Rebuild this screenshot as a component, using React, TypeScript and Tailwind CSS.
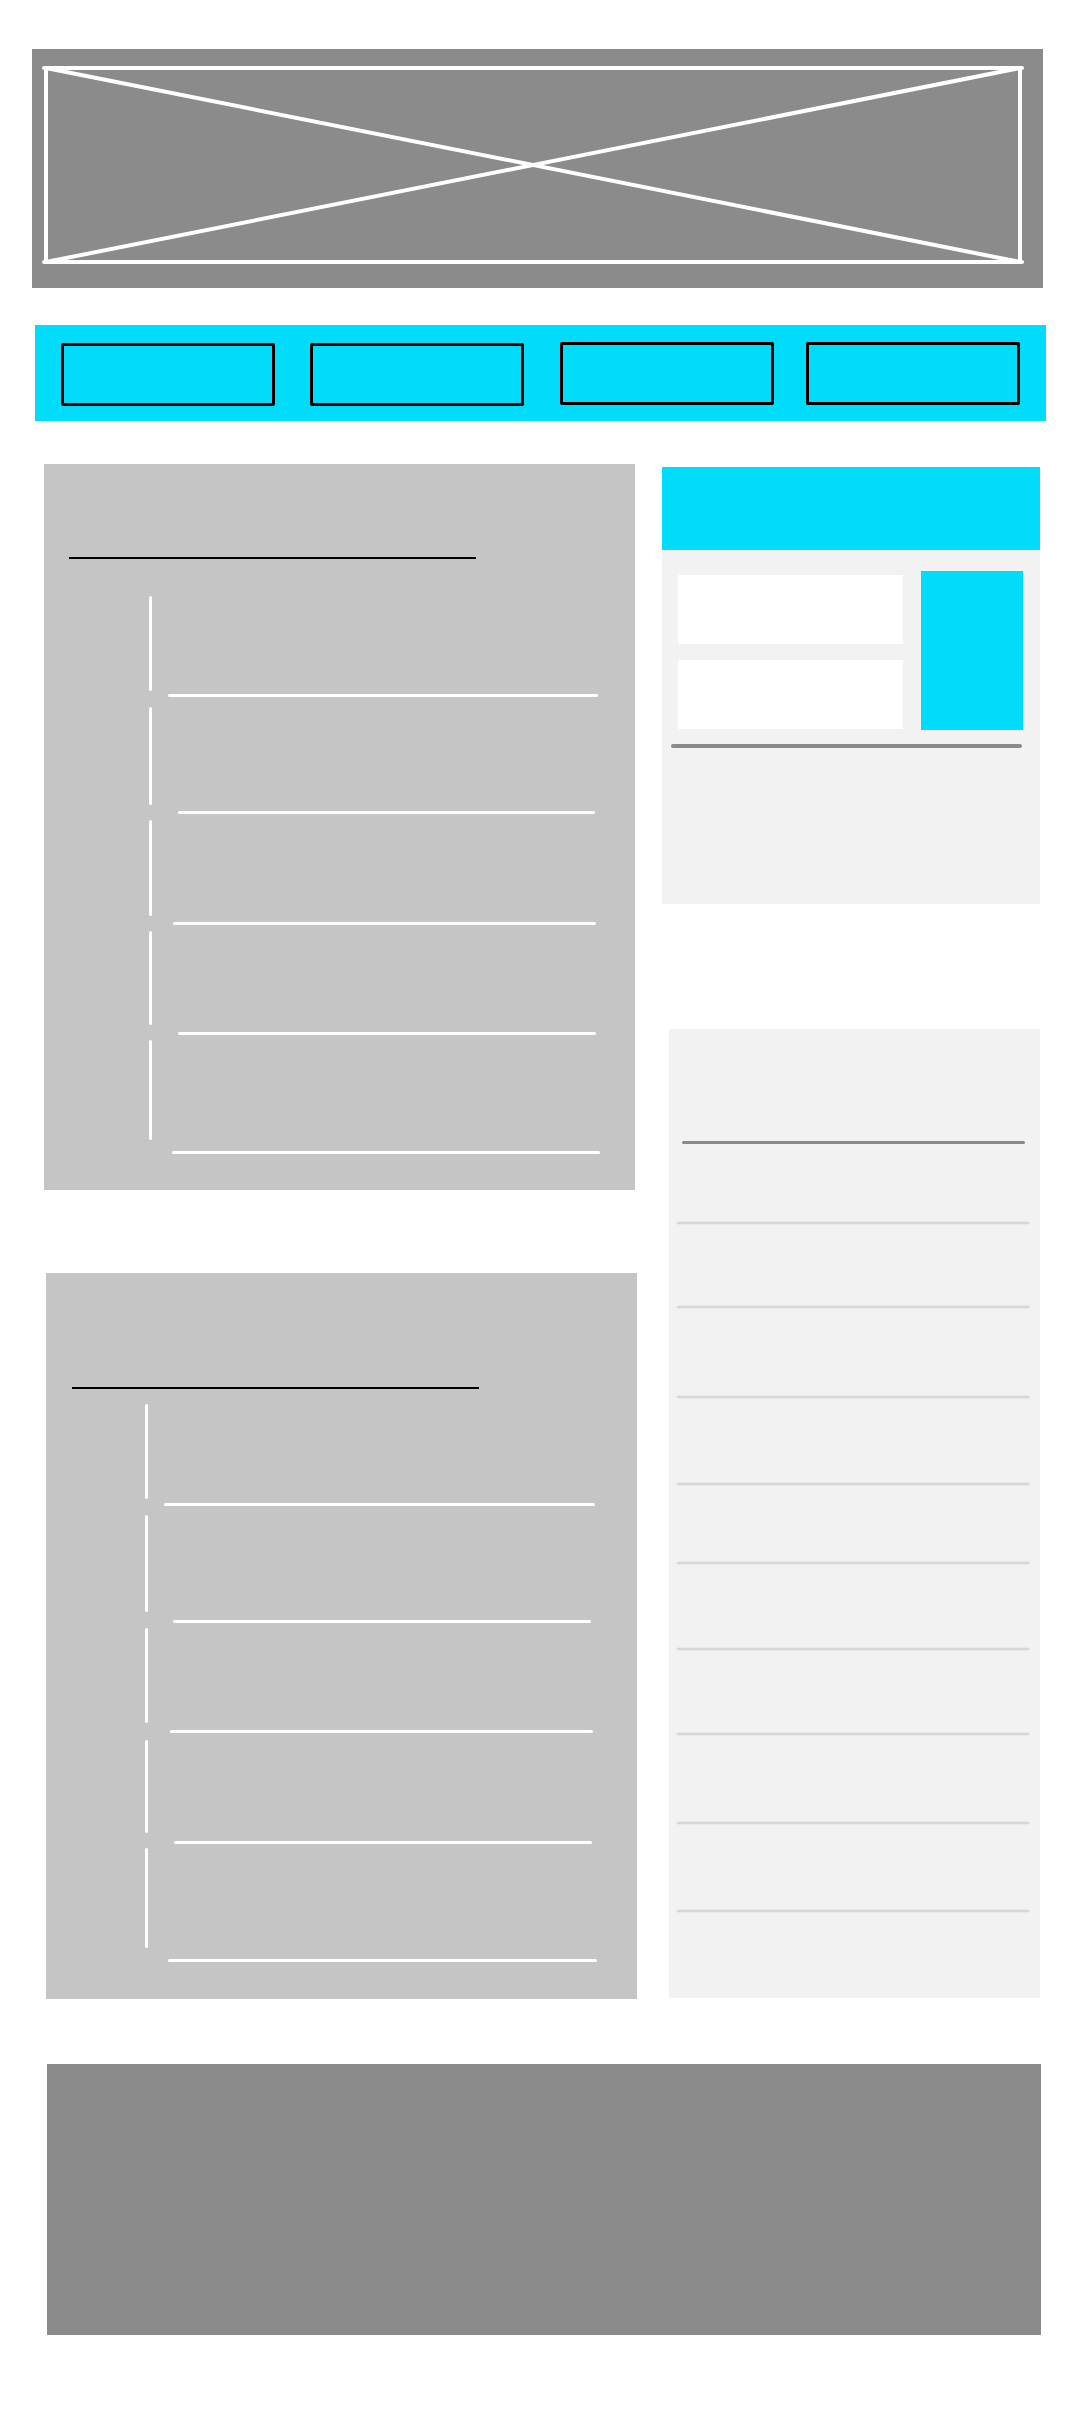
import React from 'react';

const NavButton: React.FC<{ className?: string }> = ({ className = '' }) => (
  <div className={`w-[214px] h-[63px] border-[3px] border-black rounded-[2px] bg-[#00dcf9] ${className}`} />
);

// one step of the outline list: a short vertical rule, then a long horizontal rule under it
const OutlineRow: React.FC<{ vClass: string; lineClass: string }> = ({ vClass, lineClass }) => (
  <>
    <div className={`w-[3px] bg-white rounded-full ${vClass}`} />
    <div className={`h-[3px] bg-white rounded-full ${lineClass}`} />
  </>
);

const HeroPlaceholder: React.FC = () => (
  <div className="w-[1011px] h-[239px] ml-[32px] mt-[49px] bg-[#8b8b8b] flex">
    <svg
      className="ml-[12px] mt-[17px] w-[978px] h-[198px] overflow-visible"
      viewBox="0 0 978 198"
      preserveAspectRatio="none"
    >
      <g stroke="#ffffff" strokeWidth="4" strokeLinecap="round" fill="none">
        <line x1="0" y1="2" x2="978" y2="2" />
        <line x1="0" y1="196" x2="978" y2="196" />
        <line x1="2" y1="2" x2="2" y2="196" />
        <line x1="976" y1="2" x2="976" y2="196" />
        <line x1="2" y1="2" x2="976" y2="196" />
        <line x1="2" y1="196" x2="976" y2="2" />
      </g>
    </svg>
  </div>
);

const LightRule: React.FC<{ className: string }> = ({ className }) => (
  <div className={`ml-[8px] w-[352px] h-[2px] bg-[#d6d6d6] shadow-[0_0_2px_#d6d6d6] ${className}`} />
);

export default function App() {
  return (
    <div className="w-[1080px] min-h-[2416px] bg-white flex flex-col" style={{ fontFamily: 'Inter, sans-serif' }}>
      <HeroPlaceholder />

      {/* nav strip */}
      <nav className="w-[1011px] h-[96px] ml-[35px] mt-[37px] bg-[#00dcf9] flex">
        <NavButton className="ml-[26px] mt-[18px]" />
        <NavButton className="ml-[35px] mt-[18px]" />
        <NavButton className="ml-[36px] mt-[17px]" />
        <NavButton className="ml-[32px] mt-[17px]" />
      </nav>

      <div className="flex mt-[43px]">
        {/* left column */}
        <div className="flex flex-col ml-[44px]">
          <section className="w-[591px] h-[726px] bg-[#c5c5c5] flex flex-col">
            <div className="ml-[25px] mt-[93px] w-[407px] h-[2px] bg-black" />
            <OutlineRow vClass="ml-[105px] mt-[37px] h-[95px]" lineClass="ml-[124px] mt-[3px] w-[430px]" />
            <OutlineRow vClass="ml-[105px] mt-[10px] h-[98px]" lineClass="ml-[134px] mt-[6px] w-[417px]" />
            <OutlineRow vClass="ml-[105px] mt-[6px] h-[96px]" lineClass="ml-[129px] mt-[6px] w-[423px]" />
            <OutlineRow vClass="ml-[105px] mt-[6px] h-[94px]" lineClass="ml-[134px] mt-[7px] w-[418px]" />
            <OutlineRow vClass="ml-[105px] mt-[5px] h-[100px]" lineClass="ml-[128px] mt-[11px] w-[428px]" />
          </section>

          <section className="w-[591px] h-[726px] ml-[2px] mt-[83px] bg-[#c5c5c5] flex flex-col">
            <div className="ml-[26px] mt-[114px] w-[407px] h-[2px] bg-black" />
            <OutlineRow vClass="ml-[99px] mt-[15px] h-[95px]" lineClass="ml-[118px] mt-[4px] w-[431px]" />
            <OutlineRow vClass="ml-[99px] mt-[9px] h-[97px]" lineClass="ml-[127px] mt-[8px] w-[418px]" />
            <OutlineRow vClass="ml-[99px] mt-[5px] h-[95px]" lineClass="ml-[124px] mt-[7px] w-[423px]" />
            <OutlineRow vClass="ml-[99px] mt-[7px] h-[93px]" lineClass="ml-[128px] mt-[8px] w-[418px]" />
            <OutlineRow vClass="ml-[99px] mt-[4px] h-[100px]" lineClass="ml-[122px] mt-[11px] w-[429px]" />
          </section>
        </div>

        {/* right column */}
        <div className="flex flex-col ml-[25px]">
          <section className="w-[378px] h-[437px] mt-[3px] bg-[#f2f2f2] flex flex-col">
            <div className="h-[83px] bg-[#00dcf9]" />
            <div className="flex pl-[16px]">
              <div className="flex flex-col gap-[16px] mt-[25px]">
                <div className="w-[225px] h-[69px] bg-white" />
                <div className="w-[225px] h-[69px] bg-white" />
              </div>
              <div className="w-[102px] h-[159px] ml-[18px] mt-[21px] bg-[#00dcf9]" />
            </div>
            <div className="ml-[9px] mt-[14px] w-[351px] h-[4px] rounded-full bg-[#8a8a8a]" />
          </section>

          <section className="w-[371px] h-[969px] ml-[7px] mt-[125px] bg-[#f2f2f2] flex flex-col">
            <div className="ml-[13px] mt-[112px] w-[343px] h-[3px] rounded-full bg-[#8a8a8a]" />
            <LightRule className="mt-[78px]" />
            <LightRule className="mt-[82px]" />
            <LightRule className="mt-[88px]" />
            <LightRule className="mt-[85px]" />
            <LightRule className="mt-[77px]" />
            <LightRule className="mt-[84px]" />
            <LightRule className="mt-[83px]" />
            <LightRule className="mt-[87px]" />
            <LightRule className="mt-[86px]" />
          </section>
        </div>
      </div>

      <footer className="w-[994px] h-[271px] ml-[47px] mt-[65px] bg-[#8b8b8b]" />
    </div>
  );
}
